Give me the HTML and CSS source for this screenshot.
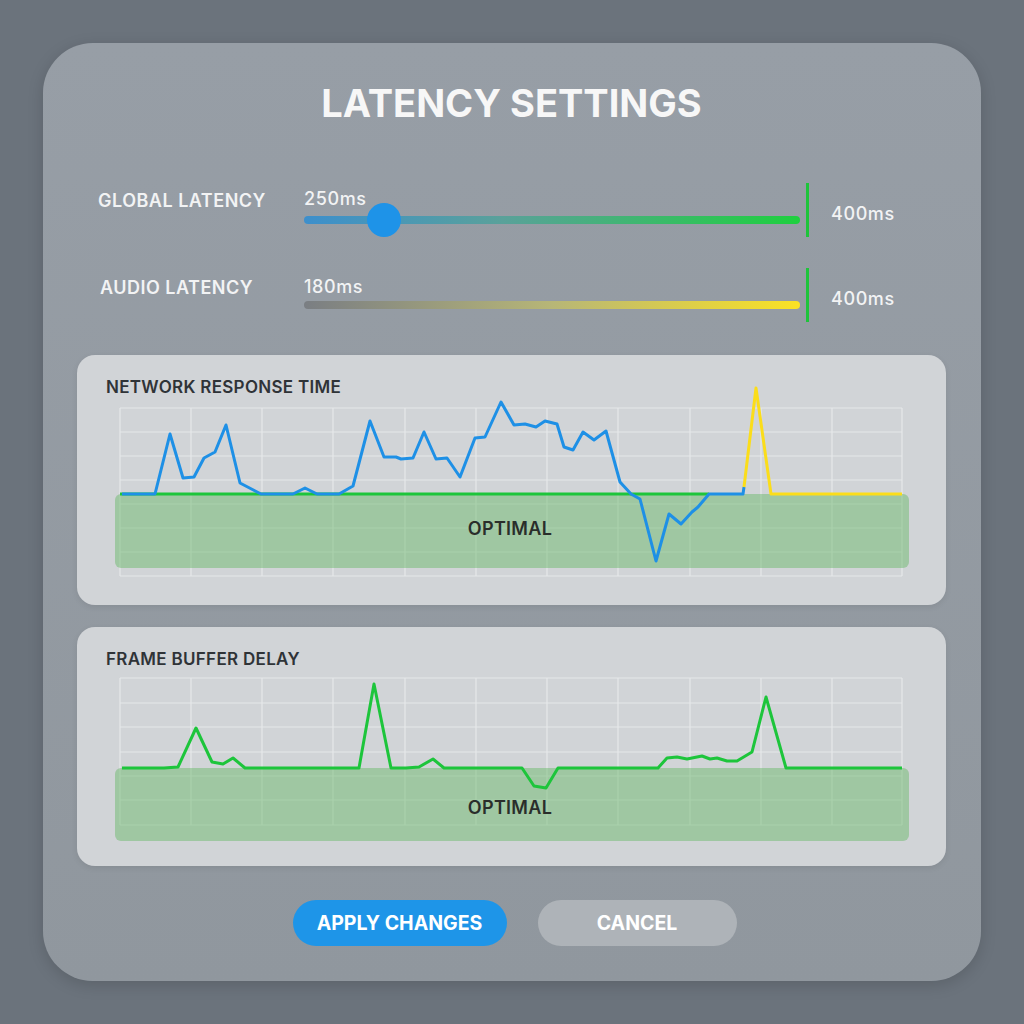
FILE: index.html
```html
<!DOCTYPE html>
<html>
<head>
    <title>Latency Settings</title>
    <link rel="stylesheet" href="styles.css">
</head>
<body>
    <div class="panel">
        <h1>LATENCY SETTINGS</h1>

        <div class="slider-row first">
            <div class="slider-label">GLOBAL LATENCY</div>
            <div class="slider-wrap">
                <div class="slider-value">250ms</div>
                <div class="track track-global">
                    <div class="thumb"></div>
                </div>
            </div>
            <div class="tick"></div>
            <div class="slider-max">400ms</div>
        </div>

        <div class="slider-row second">
            <div class="slider-label">AUDIO LATENCY</div>
            <div class="slider-wrap">
                <div class="slider-value">180ms</div>
                <div class="track track-audio"></div>
            </div>
            <div class="tick"></div>
            <div class="slider-max">400ms</div>
        </div>

        <div class="chart-card network">
            <div class="chart-title">NETWORK RESPONSE TIME</div>
            <svg class="chart" width="795" height="175" viewBox="115 405 795 175">
                <g class="grid">
                    <line x1="120" y1="408" x2="902" y2="408"/>
                    <line x1="120" y1="432" x2="902" y2="432"/>
                    <line x1="120" y1="456" x2="902" y2="456"/>
                    <line x1="120" y1="480" x2="902" y2="480"/>
                    <line x1="120" y1="504" x2="902" y2="504"/>
                    <line x1="120" y1="528" x2="902" y2="528"/>
                    <line x1="120" y1="552" x2="902" y2="552"/>
                    <line x1="120" y1="576" x2="902" y2="576"/>
                    <line x1="120" y1="408" x2="120" y2="576"/>
                    <line x1="191" y1="408" x2="191" y2="576"/>
                    <line x1="262" y1="408" x2="262" y2="576"/>
                    <line x1="333" y1="408" x2="333" y2="576"/>
                    <line x1="405" y1="408" x2="405" y2="576"/>
                    <line x1="476" y1="408" x2="476" y2="576"/>
                    <line x1="547" y1="408" x2="547" y2="576"/>
                    <line x1="618" y1="408" x2="618" y2="576"/>
                    <line x1="690" y1="408" x2="690" y2="576"/>
                    <line x1="761" y1="408" x2="761" y2="576"/>
                    <line x1="832" y1="408" x2="832" y2="576"/>
                    <line x1="902" y1="408" x2="902" y2="576"/>
                </g>
                <rect class="band" x="115" y="494" width="794" height="74" rx="6"/>
                <text class="band-label" x="510" y="535">OPTIMAL</text>
                <polyline class="line-green" points="120,494 709,494"/>
                <polyline class="line-blue" points="122,494 155,494 170,434 183,478 194,477 204,458 215,452 226,425 240,483 261,494 293,494 305,488 317,494 339,494 353,486 370,421 384,457 396,457 401,459 413,458 424,432 436,459 447,458 460,477 475,438 485,437 501,402 514,425 525,424 536,427 545,421 557,424 564,447 573,450 583,432 594,440 606,431 620,482 631,494 640,499 656,561 669,514 681,524 692,512 698,507 709,494 743,494 744,487"/>
                <polyline class="line-yellow" points="744,487 756,388 771,494 902,494"/>
            </svg>
        </div>

        <div class="chart-card frame">
            <div class="chart-title">FRAME BUFFER DELAY</div>
            <svg class="chart" width="795" height="170" viewBox="115 675 795 170">
                <g class="grid">
                    <line x1="120" y1="678" x2="902" y2="678"/>
                    <line x1="120" y1="703" x2="902" y2="703"/>
                    <line x1="120" y1="727" x2="902" y2="727"/>
                    <line x1="120" y1="752" x2="902" y2="752"/>
                    <line x1="120" y1="776" x2="902" y2="776"/>
                    <line x1="120" y1="800" x2="902" y2="800"/>
                    <line x1="120" y1="825" x2="902" y2="825"/>
                    <line x1="120" y1="678" x2="120" y2="825"/>
                    <line x1="191" y1="678" x2="191" y2="825"/>
                    <line x1="262" y1="678" x2="262" y2="825"/>
                    <line x1="333" y1="678" x2="333" y2="825"/>
                    <line x1="405" y1="678" x2="405" y2="825"/>
                    <line x1="476" y1="678" x2="476" y2="825"/>
                    <line x1="547" y1="678" x2="547" y2="825"/>
                    <line x1="618" y1="678" x2="618" y2="825"/>
                    <line x1="690" y1="678" x2="690" y2="825"/>
                    <line x1="761" y1="678" x2="761" y2="825"/>
                    <line x1="832" y1="678" x2="832" y2="825"/>
                    <line x1="902" y1="678" x2="902" y2="825"/>
                </g>
                <rect class="band" x="115" y="768" width="794" height="73" rx="6"/>
                <text class="band-label" x="510" y="814">OPTIMAL</text>
                <polyline class="line-green" points="122,768 164,768 178,767 196,728 212,762 223,764 233,758 245,768 359,768 374,684 391,768 406,768 419,767 433,759 444,768 522,768 534,786 546,788 558,768 658,768 667,758 677,757 687,759 702,756 710,759 717,758 727,761 737,761 752,752 766,697 786,768 902,768"/>
            </svg>
        </div>

        <div class="actions">
            <button class="btn btn-apply">APPLY CHANGES</button>
            <button class="btn btn-cancel">CANCEL</button>
        </div>
    </div>
</body>
</html>
```

FILE: styles.css
```css
body {
    margin: 0;
    padding: 43px;
    background-color: #6b737c;
    font-family: Inter, 'Open Sans', Arial, sans-serif;
}

.panel {
    width: 938px;
    height: 938px;
    box-sizing: border-box;
    padding: 36px 35px 0 34px;
    border-radius: 50px;
    background: linear-gradient(to bottom, #979ea6, #90979e);
    box-shadow: 0 4px 16px rgba(0, 0, 0, 0.15);
}

h1 {
    margin: 0;
    height: 48px;
    line-height: 48px;
    font-size: 38px;
    font-weight: 700;
    color: #f7f7f7;
    text-align: center;
}

.slider-row {
    display: flex;
    height: 54px;
    padding-left: 21px;
    color: #f2f3f4;
    font-weight: 600;
}

.slider-row.first {
    margin-top: 56px;
}

.slider-row.second {
    margin-top: 31px;
}

.slider-label {
    flex: none;
    width: 206px;
    padding-top: 8px;
    font-size: 18px;
    line-height: 20px;
    letter-spacing: 0.5px;
}

.second .slider-label {
    padding-top: 10px;
    margin-left: 2px;
    width: 204px;
}

.slider-wrap {
    flex: none;
    width: 496px;
    padding-top: 6px;
}

.second .slider-wrap {
    padding-top: 9px;
}

.slider-value,
.slider-max {
    font-size: 18px;
    line-height: 20px;
    font-weight: 500;
    letter-spacing: 0.6px;
}

.track {
    position: relative;
    height: 8px;
    margin-top: 7px;
    border-radius: 4px;
}

.second .track {
    margin-top: 4px;
}

.track-global {
    background: linear-gradient(to right, #3d8fcc, #5aa19a 40%, #1fd03f);
}

.track-audio {
    background: linear-gradient(to right, #7a7e83, #b7b677 50%, #fbe224);
}

.thumb {
    position: absolute;
    left: 63px;
    top: -13px;
    width: 34px;
    height: 34px;
    border-radius: 50%;
    background-color: #1e93e8;
}

.tick {
    flex: none;
    width: 3px;
    height: 54px;
    margin-left: 6px;
    background-color: #1ec43a;
}

.slider-max {
    margin-left: 22px;
    padding-top: 21px;
}

.chart-card {
    border-radius: 18px;
    background-color: #d1d4d7;
    box-shadow: 0 2px 6px rgba(0, 0, 0, 0.08);
    padding: 22px 0 0 29px;
    box-sizing: border-box;
}

.chart-card.network {
    margin-top: 33px;
    height: 250px;
}

.chart-card.frame {
    margin-top: 22px;
    height: 239px;
}

.chart-title {
    font-size: 17px;
    line-height: 20px;
    font-weight: 600;
    color: #2f3337;
    letter-spacing: 0.3px;
}

.chart {
    display: block;
    margin-left: 9px;
    overflow: visible;
}

.network .chart {
    margin-top: 8px;
}

.frame .chart {
    margin-top: 6px;
}

.grid line {
    stroke: #e6e8ea;
    stroke-width: 1.2;
}

.band {
    fill: rgba(110, 185, 110, 0.5);
}

.band-label {
    font-family: Inter, 'Open Sans', Arial, sans-serif;
    font-size: 18px;
    font-weight: 600;
    letter-spacing: 0.3px;
    fill: #2a2e2b;
    text-anchor: middle;
}

.line-green,
.line-blue,
.line-yellow {
    fill: none;
    stroke-width: 3;
    stroke-linejoin: round;
}

.line-green {
    stroke: #1dc53b;
}

.line-blue {
    stroke: #1e90e6;
}

.line-yellow {
    stroke: #fbdd1a;
}

.actions {
    display: flex;
    justify-content: center;
    gap: 31px;
    margin-top: 34px;
    padding-left: 6px;
}

.btn {
    height: 46px;
    border: none;
    border-radius: 23px;
    font-family: Inter, 'Open Sans', Arial, sans-serif;
    font-size: 19.5px;
    font-weight: 700;
    color: #fff;
    cursor: pointer;
}

.btn-apply {
    width: 214px;
    background-color: #1e95e8;
}

.btn-cancel {
    width: 199px;
    background-color: #aeb3b8;
}
```
